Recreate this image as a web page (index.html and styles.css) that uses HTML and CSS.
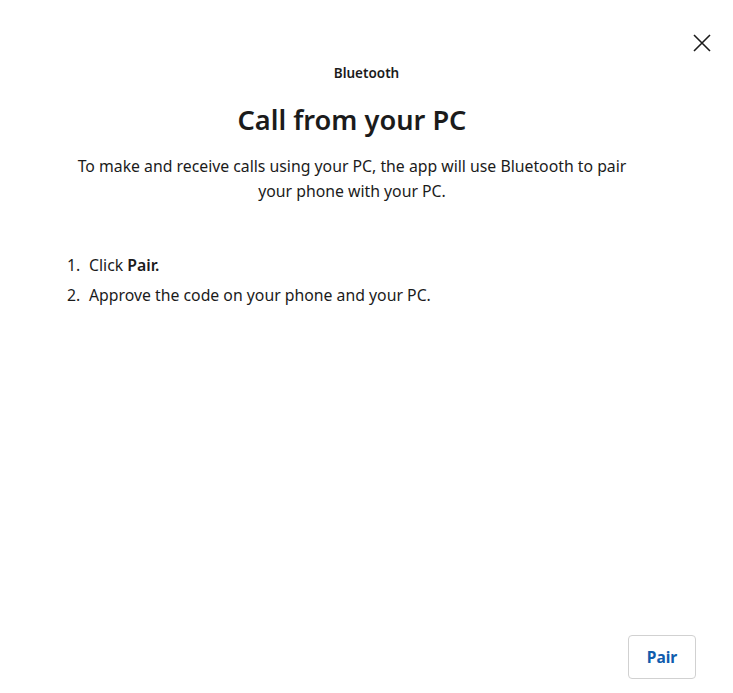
FILE: index.html
```html
<!DOCTYPE html>
<html lang="en">
<head>
    <meta charset="UTF-8">
    <meta name="viewport" content="width=device-width, initial-scale=1.0">
    <title>Call from your PC</title>
    <link rel="stylesheet" href="styles.css">
</head>
<body>

    <div class="dialog">
        <div class="top-bar">
            <button class="close-btn" aria-label="Close">
                <svg width="18" height="18" viewBox="0 0 18 18">
                    <path d="M1 1 L17 17 M17 1 L1 17" stroke="#1b1b1b" stroke-width="1.6" fill="none"/>
                </svg>
            </button>
        </div>

        <div class="content">
            <p class="eyebrow">Bluetooth</p>
            <div class="main">
                <h1>Call from your PC</h1>
                <p class="intro">To make and receive calls using your PC, the app will use Bluetooth to pair your phone with your PC.</p>
            </div>

            <ol class="steps">
                <li><span class="num">1.</span> <span>Click <strong>Pair.</strong></span></li>
                <li><span class="num">2.</span> <span>Approve the code on your phone and your PC.</span></li>
            </ol>
        </div>

        <div class="footer">
            <button class="pair-btn">Pair</button>
        </div>
    </div>

</body>
</html>
```

FILE: styles.css
```css
body {
    margin: 0;
    font-family: "Noto Sans", "Open Sans", sans-serif;
    color: #1b1b1b;
    background-color: #fff;
}
.dialog {
    height: 693px;
    display: flex;
    flex-direction: column;
    box-sizing: border-box;
}
.top-bar {
    display: flex;
    justify-content: flex-end;
    padding: 34px 21px 0 0;
    height: 20px;
}
.close-btn {
    border: none;
    background: none;
    padding: 0;
    width: 20px;
    height: 20px;
    cursor: pointer;
}
.content {
    flex: 1;
    padding: 0 0 0 67px;
}
.eyebrow {
    text-align: center;
    font-size: 13.5px;
    font-weight: 600;
    margin: 10px 0 0 -67px;
}
.main {
    width: 570px;
}
h1 {
    text-align: center;
    font-size: 27.2px;
    font-weight: 600;
    margin: 19px 0 0;
}
.intro {
    text-align: center;
    font-size: 15.8px;
    line-height: 25px;
    margin: 16px auto 0;
    width: 560px;
}
.steps {
    list-style: none;
    margin: 46px 0 0;
    padding: 0;
    font-size: 15.8px;
    line-height: 30px;
}
.steps li {
    display: flex;
}
.steps .num {
    width: 22px;
}
.steps strong {
    font-weight: 600;
}
.footer {
    display: flex;
    justify-content: flex-end;
    padding: 0 37px 14px 0;
}
.pair-btn {
    width: 68px;
    height: 44px;
    border: 1px solid #d1d1d1;
    border-radius: 4px;
    background-color: #fff;
    color: #0f5cad;
    font-family: inherit;
    font-size: 15.5px;
    font-weight: 700;
    cursor: pointer;
}
```
